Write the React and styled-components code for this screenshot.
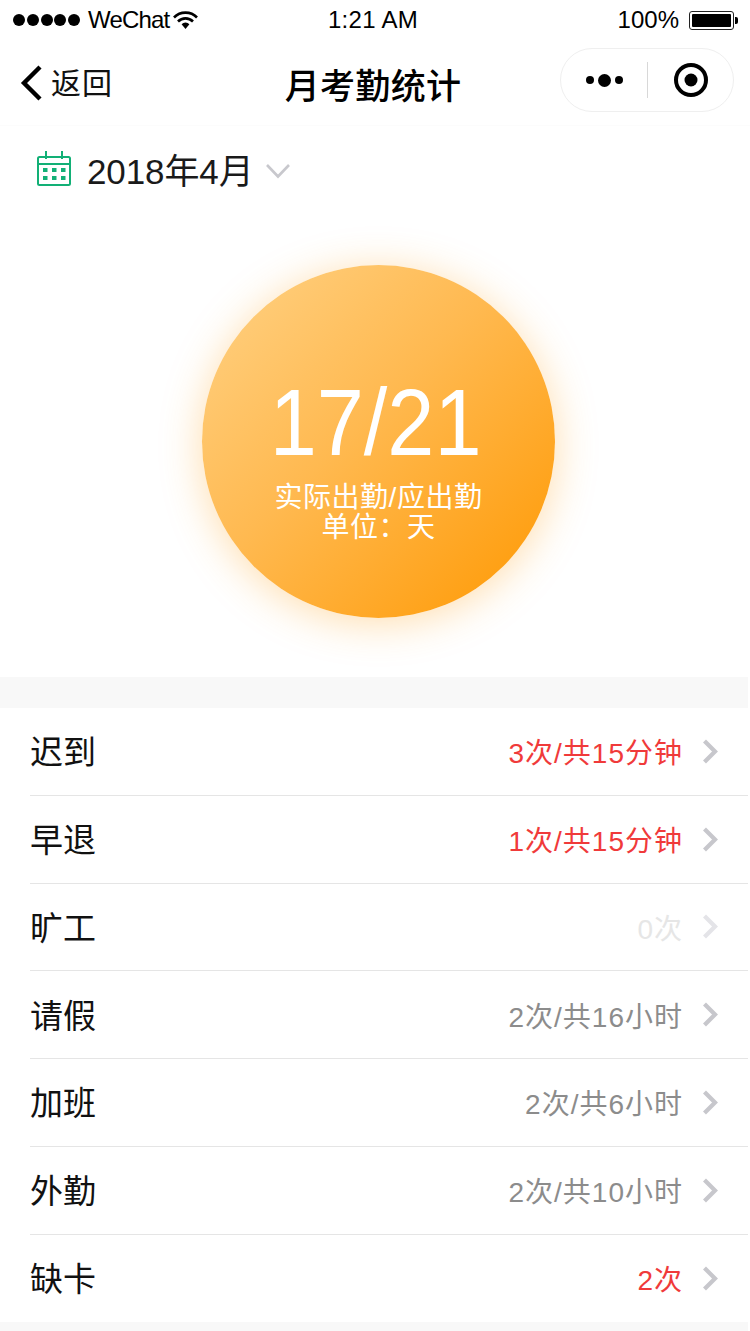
import React from "react"
import styled, { createGlobalStyle } from "styled-components"

const GlobalStyle = createGlobalStyle`
  html, body {
    margin: 0;
    padding: 0;
    background: #fff;
  }
  * {
    box-sizing: border-box;
  }
`
const FONT = `"Liberation Sans", "Noto Sans CJK SC", sans-serif`

const Page = styled.div`
  width: 750px;
  height: 1331px;
  overflow: hidden;
  background: #fff;
  font-family: ${FONT};
  color: #000;
`
const StatusBar = styled.div`
  height: 40px;
  padding: 0 16px 0 13px;
  display: grid;
  grid-template-columns: 1fr auto 1fr;
  align-items: center;
  font-size: 24px;
  line-height: 40px;
`
const StatusLeft = styled.div`
  display: flex;
  align-items: center;
`
const StatusRight = styled.div`
  display: flex;
  align-items: center;
  justify-content: flex-end;
`
const StatusTime = styled.div`
  margin-right: 1px;
  letter-spacing: 0.3px;
`
const Carrier = styled.span`
  margin: 0 4px 0 8px;
  letter-spacing: -0.8px;
`
const Signal = styled.div`
  display: flex;
  gap: 1.75px;
`
const Dot = styled.i`
  width: 12px;
  height: 12px;
  border-radius: 50%;
  background: #000;
`
const Battery = styled.div`
  width: 45px;
  height: 19px;
  margin-left: 10px;
  padding: 2px;
  border: 1px solid #222;
  border-radius: 3px;
  position: relative;
  &::before {
    content: "";
    display: block;
    height: 100%;
    background: #000;
    border-radius: 1px;
  }
  &::after {
    content: "";
    position: absolute;
    right: -5px;
    top: 5px;
    width: 3px;
    height: 7px;
    background: #000;
    border-radius: 0 2px 2px 0;
  }
`
const NavBar = styled.div`
  height: 86px;
  padding: 0 16px 0 20px;
  display: grid;
  grid-template-columns: 1fr auto 1fr;
  align-items: center;
  border-bottom: 1px solid #fcfcfc;
`
const Back = styled.div`
  display: flex;
  align-items: center;
  gap: 7px;
  font-size: 30px;
  color: #111;
  letter-spacing: 1px;
`
const BackText = styled.span`
  margin-bottom: 3px;
`
const Title = styled.div`
  font-size: 35px;
  font-weight: 500;
  letter-spacing: 0.3px;
  padding-top: 2px;
  margin-right: 8px;
`
const Capsule = styled.div`
  justify-self: end;
  width: 174px;
  height: 64px;
  margin-top: -5px;
  border: 1px solid #efefef;
  border-radius: 32px;
  display: flex;
  align-items: center;
`
const CapsulePart = styled.div`
  flex: 1;
  display: flex;
  align-items: center;
  justify-content: center;
`
const CapsuleLine = styled.div`
  width: 1px;
  height: 36px;
  background: #d8d8d8;
`
const MoreDots = styled.div`
  display: flex;
  align-items: center;
  gap: 4px;
  margin-left: 2px;
`
const MoreDot = styled.i`
  width: ${(props) => props.size}px;
  height: ${(props) => props.size}px;
  border-radius: 50%;
  background: #000;
`
const TargetWrap = styled.span`
  display: flex;
  margin-left: 2px;
`
const DateRow = styled.div`
  height: 90px;
  padding: 0 0 5px 36px;
  display: flex;
  align-items: center;
  gap: 15px;
  font-size: 35px;
  color: #1a1a1a;
`
const DateText = styled.span`
  margin-right: -3px;
  letter-spacing: -0.1px;
`
const CaretWrap = styled.span`
  display: flex;
  margin: 5px 0 0 -1px;
`
const Hero = styled.div`
  height: 461px;
  width: 748px;
  padding-top: 49px;
  padding-left: 202px;
`
const Circle = styled.div`
  width: 353px;
  height: 353px;
  border-radius: 50%;
  background: linear-gradient(135deg, #ffd285 0%, #ffb950 45%, #ff9800 100%);
  box-shadow: 0 5px 40px rgba(255, 165, 40, 0.38);
  color: #fff;
  display: flex;
  flex-direction: column;
  align-items: center;
  padding-top: 113px;
`
const Big = styled.div`
  font-size: 94px;
  line-height: 90px;
  height: 105px;
  margin-right: 5px;
  transform: scaleX(0.9);
`
const Sub = styled.div`
  font-size: 28px;
  line-height: 30px;
  text-align: center;
  letter-spacing: 0.5px;
`
const Band = styled.div`
  width: 748px;
  height: 31px;
  background: #f8f8f8;
`
const List = styled.div`
  width: 748px;
`
const Row = styled.div`
  height: 87.75px;
  margin-left: 30px;
  padding-right: 30px;
  display: flex;
  align-items: center;
  border-bottom: ${(props) => (props.$last ? "none" : "1px solid #e5e5e5")};
`
const Label = styled.div`
  flex: 1;
  font-size: 33px;
  color: #111;
  padding-bottom: 2px;
`
const Value = styled.div`
  font-size: 28px;
  letter-spacing: 1px;
  color: ${(props) => props.$color};
  margin-right: 19px;
`
const BottomBand = styled(Band)`
  height: 9px;
`

const rows = [
  { label: "迟到", value: "3次/共15分钟", color: "#f03a3a" },
  { label: "早退", value: "1次/共15分钟", color: "#f03a3a" },
  { label: "旷工", value: "0次", color: "#e6e6e6", faint: true },
  { label: "请假", value: "2次/共16小时", color: "#8c8c8c" },
  { label: "加班", value: "2次/共6小时", color: "#8c8c8c" },
  { label: "外勤", value: "2次/共10小时", color: "#8c8c8c" },
  { label: "缺卡", value: "2次", color: "#f03a3a" },
]

function Wifi() {
  return (
    <svg width="25" height="20" viewBox="0 0 25 20">
      <path d="M1 7.5a16 16 0 0 1 23 0" fill="none" stroke="#000" strokeWidth="2.6" />
      <path d="M5 11.5a10.5 10.5 0 0 1 15 0" fill="none" stroke="#000" strokeWidth="2.6" />
      <path d="M8.6 14.2a5.4 5.4 0 0 1 7.8 0L12.5 19z" fill="#000" />
    </svg>
  )
}

function BackArrow() {
  return (
    <svg width="24" height="36" viewBox="0 0 24 36">
      <path d="M20 2L4 18l16 16" fill="none" stroke="#000" strokeWidth="4.4" />
    </svg>
  )
}

function Target() {
  return (
    <svg width="36" height="36" viewBox="0 0 36 36">
      <circle cx="18" cy="18" r="15" fill="none" stroke="#000" strokeWidth="4" />
      <circle cx="18" cy="18" r="6.5" fill="#000" />
    </svg>
  )
}

function CalendarIcon() {
  return (
    <svg width="36" height="36" viewBox="0 0 36 36">
      <rect x="2" y="6" width="32" height="28" rx="1.5" fill="none" stroke="#12b076" strokeWidth="2" />
      <path d="M2 13h32M10 0v8M26 0v8" fill="none" stroke="#12b076" strokeWidth="2" />
      <path
        d="M7 17h4.5v4H7zM16 17h4.5v4H16zM25 17h4.5v4H25zM7 25h4.5v4H7zM16 25h4.5v4H16zM25 25h4.5v4H25z"
        fill="#12b076"
      />
    </svg>
  )
}

function Caret() {
  return (
    <svg width="26" height="16" viewBox="0 0 26 16">
      <path d="M2 2L13 13.5 24 2" fill="none" stroke="#c8c8cd" strokeWidth="2.6" />
    </svg>
  )
}

function RowArrow({ faint }) {
  return (
    <svg width="16" height="25" viewBox="0 0 16 25">
      <path
        d="M2.5 2l10.5 10.5L2.5 23"
        fill="none"
        stroke={faint ? "#e4e4e8" : "#c7c7cc"}
        strokeWidth="4.2"
      />
    </svg>
  )
}

export default function App() {
  return (
    <Page>
      <GlobalStyle />
      <StatusBar>
        <StatusLeft>
          <Signal>
            {[0, 1, 2, 3, 4].map((i) => (
              <Dot key={i} />
            ))}
          </Signal>
          <Carrier>WeChat</Carrier>
          <Wifi />
        </StatusLeft>
        <StatusTime>1:21 AM</StatusTime>
        <StatusRight>
          100%
          <Battery />
        </StatusRight>
      </StatusBar>
      <NavBar>
        <Back>
          <BackArrow />
          <BackText>返回</BackText>
        </Back>
        <Title>月考勤统计</Title>
        <Capsule>
          <CapsulePart>
            <MoreDots>
              <MoreDot size={8} />
              <MoreDot size={13} />
              <MoreDot size={8} />
            </MoreDots>
          </CapsulePart>
          <CapsuleLine />
          <CapsulePart>
            <TargetWrap>
              <Target />
            </TargetWrap>
          </CapsulePart>
        </Capsule>
      </NavBar>
      <DateRow>
        <CalendarIcon />
        <DateText>2018年4月</DateText>
        <CaretWrap>
          <Caret />
        </CaretWrap>
      </DateRow>
      <Hero>
        <Circle>
          <Big>17/21</Big>
          <Sub>
            实际出勤/应出勤
            <br />
            单位：天
          </Sub>
        </Circle>
      </Hero>
      <Band />
      <List>
        {rows.map((row, i) => (
          <Row key={row.label} $last={i === rows.length - 1}>
            <Label>{row.label}</Label>
            <Value $color={row.color}>{row.value}</Value>
            <RowArrow faint={row.faint} />
          </Row>
        ))}
      </List>
      <BottomBand />
    </Page>
  )
}
